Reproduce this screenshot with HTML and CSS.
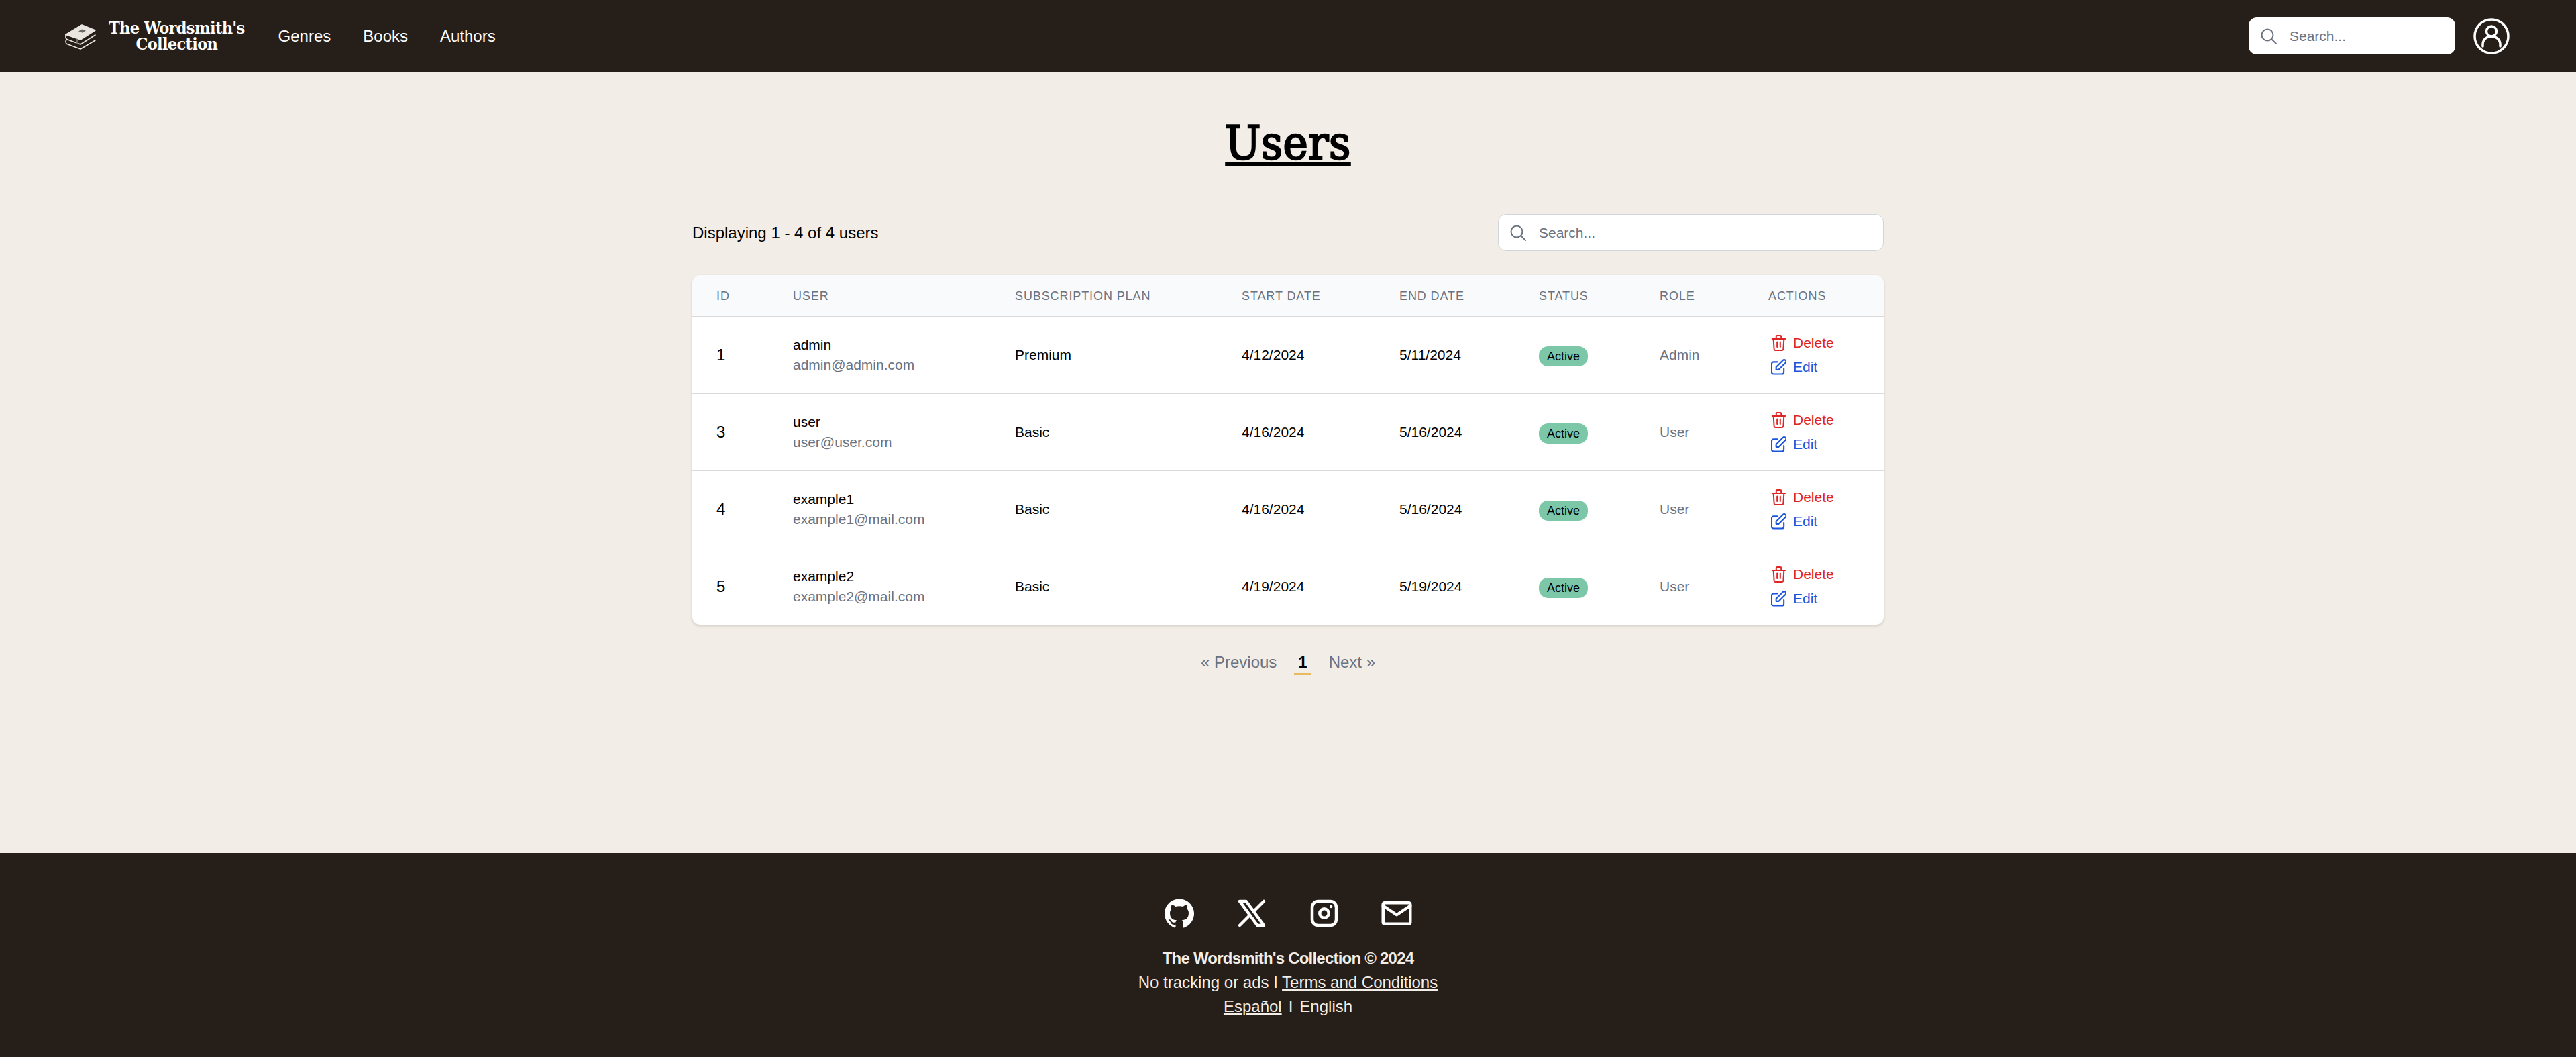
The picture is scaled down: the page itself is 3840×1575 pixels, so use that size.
FILE: index.html
```html
<!DOCTYPE html>
<html lang="en">
<head>
    <meta charset="UTF-8">
    <meta name="viewport" content="width=device-width, initial-scale=1.0">
    <title>Users - The Wordsmith's Collection</title>
    <link rel="stylesheet" href="styles.css">
</head>
<body>
    <nav class="navbar">
        <a class="brand" href="#">
            <svg class="brand-icon" viewBox="0 0 46 38" fill="none" stroke="#e9e6e1" stroke-width="1.6" stroke-linejoin="round" stroke-linecap="round">
                <path d="M1 15.5 25 1 45 9 23 23 1 15.5z" fill="#e9e6e1"/>
                <path d="M20 10.5l5-3 6 2.2-5 3z" fill="#6f6b66" stroke="none"/>
                <path d="M1 15.5v4c0 2 1 3 3 3.6L23 30 45 16"/>
                <path d="M2 23.5c-1.500 1-1.500 5 1 6L23 37 45 24"/>
                <path d="M17 21.500v8l3 1v-8z" fill="#6f6b66" stroke="none"/>
            </svg>
            <span class="brand-name">The Wordsmith's<br>Collection</span>
        </a>
        <ul class="nav-links">
            <li><a href="#">Genres</a></li>
            <li><a href="#">Books</a></li>
            <li><a href="#">Authors</a></li>
        </ul>
        <div class="nav-right">
            <label class="search search-nav">
                <svg class="search-icon" viewBox="0 0 24 24" fill="none" stroke="#6b7280" stroke-width="2" stroke-linecap="round"><circle cx="10" cy="10" r="8.500"/><path d="M16.500 16.500 23 23"/></svg>
                <input type="text" placeholder="Search...">
            </label>
            <svg class="avatar" viewBox="0 0 54 54" fill="none" stroke="#fff" stroke-width="3.500" stroke-linecap="round">
                <circle cx="27" cy="27" r="25"/>
                <circle cx="27" cy="19.500" r="7.500"/>
                <path d="M14 42v-3c0-7 6-12 13-12s13 5 13 12v3"/>
            </svg>
        </div>
    </nav>

    <main class="content">
        <h1 class="page-title">Users</h1>
        <div class="toolbar">
            <p class="count">Displaying 1 - 4 of 4 users</p>
            <label class="search search-page">
                <svg class="search-icon" viewBox="0 0 24 24" fill="none" stroke="#6b7280" stroke-width="2" stroke-linecap="round"><circle cx="10" cy="10" r="8.500"/><path d="M16.500 16.500 23 23"/></svg>
                <input type="text" placeholder="Search...">
            </label>
        </div>

        <div class="table-card">
            <table class="users-table">
                <thead>
                    <tr>
                        <th class="col-id">ID</th>
                        <th class="col-user">User</th>
                        <th class="col-plan">Subscription Plan</th>
                        <th class="col-start">Start Date</th>
                        <th class="col-end">End Date</th>
                        <th class="col-status">Status</th>
                        <th class="col-role">Role</th>
                        <th class="col-actions">Actions</th>
                    </tr>
                </thead>
                <tbody>
                    <tr>
                        <td class="cell-id">1</td>
                        <td><div>admin</div><div class="muted">admin@admin.com</div></td>
                        <td>Premium</td>
                        <td>4/12/2024</td>
                        <td>5/11/2024</td>
                        <td><span class="badge">Active</span></td>
                        <td class="muted">Admin</td>
                        <td>
                            <a class="action action-delete" href="#"><svg viewBox="0 0 24 26" fill="none" stroke="currentColor" stroke-width="2.200" stroke-linecap="round" stroke-linejoin="round"><path d="M1.500 6.500h21M8 6.500V2.500c0-.8.500-1.300 1.300-1.300h5.400c.8 0 1.300.5 1.300 1.300v4M3.500 6.500l1 16c.1 1.500 1 2.300 2.400 2.300h10.200c1.400 0 2.300-.8 2.400-2.300l1-16M9.500 11.500v8M14.500 11.500v8"/></svg>Delete</a>
                            <a class="action action-edit" href="#"><svg viewBox="0 0 24 24" fill="none" stroke="currentColor" stroke-width="2.200" stroke-linecap="round" stroke-linejoin="round"><path d="M10 4H4a3 3 0 0 0-3 3v13a3 3 0 0 0 3 3h13a3 3 0 0 0 3-3v-6"/><path d="M8 16v-4L18.500 1.500a2.800 2.800 0 0 1 4 4L12 16H8z"/></svg>Edit</a>
                        </td>
                    </tr>
                    <tr>
                        <td class="cell-id">3</td>
                        <td><div>user</div><div class="muted">user@user.com</div></td>
                        <td>Basic</td>
                        <td>4/16/2024</td>
                        <td>5/16/2024</td>
                        <td><span class="badge">Active</span></td>
                        <td class="muted">User</td>
                        <td>
                            <a class="action action-delete" href="#"><svg viewBox="0 0 24 26" fill="none" stroke="currentColor" stroke-width="2.200" stroke-linecap="round" stroke-linejoin="round"><path d="M1.500 6.500h21M8 6.500V2.500c0-.8.500-1.300 1.300-1.300h5.400c.8 0 1.300.5 1.300 1.300v4M3.500 6.500l1 16c.1 1.500 1 2.300 2.400 2.300h10.200c1.400 0 2.300-.8 2.400-2.300l1-16M9.500 11.500v8M14.500 11.500v8"/></svg>Delete</a>
                            <a class="action action-edit" href="#"><svg viewBox="0 0 24 24" fill="none" stroke="currentColor" stroke-width="2.200" stroke-linecap="round" stroke-linejoin="round"><path d="M10 4H4a3 3 0 0 0-3 3v13a3 3 0 0 0 3 3h13a3 3 0 0 0 3-3v-6"/><path d="M8 16v-4L18.500 1.500a2.800 2.800 0 0 1 4 4L12 16H8z"/></svg>Edit</a>
                        </td>
                    </tr>
                    <tr>
                        <td class="cell-id">4</td>
                        <td><div>example1</div><div class="muted">example1@mail.com</div></td>
                        <td>Basic</td>
                        <td>4/16/2024</td>
                        <td>5/16/2024</td>
                        <td><span class="badge">Active</span></td>
                        <td class="muted">User</td>
                        <td>
                            <a class="action action-delete" href="#"><svg viewBox="0 0 24 26" fill="none" stroke="currentColor" stroke-width="2.200" stroke-linecap="round" stroke-linejoin="round"><path d="M1.500 6.500h21M8 6.500V2.500c0-.8.500-1.300 1.300-1.300h5.400c.8 0 1.300.5 1.300 1.300v4M3.500 6.500l1 16c.1 1.500 1 2.300 2.400 2.300h10.200c1.400 0 2.300-.8 2.400-2.300l1-16M9.500 11.500v8M14.500 11.500v8"/></svg>Delete</a>
                            <a class="action action-edit" href="#"><svg viewBox="0 0 24 24" fill="none" stroke="currentColor" stroke-width="2.200" stroke-linecap="round" stroke-linejoin="round"><path d="M10 4H4a3 3 0 0 0-3 3v13a3 3 0 0 0 3 3h13a3 3 0 0 0 3-3v-6"/><path d="M8 16v-4L18.500 1.500a2.800 2.800 0 0 1 4 4L12 16H8z"/></svg>Edit</a>
                        </td>
                    </tr>
                    <tr>
                        <td class="cell-id">5</td>
                        <td><div>example2</div><div class="muted">example2@mail.com</div></td>
                        <td>Basic</td>
                        <td>4/19/2024</td>
                        <td>5/19/2024</td>
                        <td><span class="badge">Active</span></td>
                        <td class="muted">User</td>
                        <td>
                            <a class="action action-delete" href="#"><svg viewBox="0 0 24 26" fill="none" stroke="currentColor" stroke-width="2.200" stroke-linecap="round" stroke-linejoin="round"><path d="M1.500 6.500h21M8 6.500V2.500c0-.8.500-1.300 1.300-1.300h5.400c.8 0 1.300.5 1.300 1.300v4M3.500 6.500l1 16c.1 1.500 1 2.300 2.400 2.300h10.200c1.400 0 2.300-.8 2.400-2.300l1-16M9.500 11.500v8M14.500 11.500v8"/></svg>Delete</a>
                            <a class="action action-edit" href="#"><svg viewBox="0 0 24 24" fill="none" stroke="currentColor" stroke-width="2.200" stroke-linecap="round" stroke-linejoin="round"><path d="M10 4H4a3 3 0 0 0-3 3v13a3 3 0 0 0 3 3h13a3 3 0 0 0 3-3v-6"/><path d="M8 16v-4L18.500 1.500a2.800 2.800 0 0 1 4 4L12 16H8z"/></svg>Edit</a>
                        </td>
                    </tr>
                </tbody>
            </table>
        </div>

        <div class="pagination">
            <a href="#">« Previous</a>
            <a class="current" href="#">1</a>
            <a href="#">Next »</a>
        </div>
    </main>

    <footer class="footer">
        <div class="socials">
            <a href="#"><svg viewBox="0 0 24 24" fill="#fff"><path d="M12 .3C5.37.3 0 5.670 0 12.300c0 5.300 3.440 9.800 8.200 11.390.6.110.82-.26.82-.58v-2.040c-3.340.72-4.040-1.610-4.040-1.610-.55-1.390-1.340-1.760-1.340-1.760-1.090-.74.080-.73.080-.73 1.210.08 1.840 1.240 1.840 1.240 1.070 1.830 2.810 1.300 3.500 1 .1-.78.42-1.310.76-1.610-2.670-.3-5.470-1.330-5.470-5.930 0-1.310.47-2.380 1.240-3.220-.14-.3-.54-1.520.1-3.180 0 0 1.010-.32 3.300 1.230.96-.27 1.980-.4 3-.4s2.040.13 3 .4c2.280-1.550 3.290-1.230 3.290-1.230.64 1.660.24 2.880.12 3.180.77.84 1.230 1.910 1.230 3.220 0 4.610-2.810 5.630-5.480 5.920.43.370.81 1.100.81 2.220v3.290c0 .32.220.69.830.57C20.570 22.090 24 17.590 24 12.300 24 5.670 18.630.3 12 .3z"/></svg></a>
            <a href="#"><svg class="line-icon" viewBox="0 0 24 24"><path d="M4 4l11.733 16h4.267l-11.733-16z"/><path d="M4 20l6.768-6.768m2.460-2.460L20 4"/></svg></a>
            <a href="#"><svg class="line-icon" viewBox="0 0 24 24"><rect x="4" y="4" width="16" height="16" rx="4"/><circle cx="12" cy="12" r="3"/><path d="M16.500 7.500v.01"/></svg></a>
            <a href="#"><svg class="line-icon" viewBox="0 0 24 24"><rect x="3" y="5" width="18" height="14" rx="1"/><path d="M3 7l9 6 9-6"/></svg></a>
        </div>
        <p class="footer-title">The Wordsmith's Collection © 2024</p>
        <p>No tracking or ads I <a href="#">Terms and Conditions</a></p>
        <p><a href="#">Español</a><span class="lang-sep">I</span>English</p>
    </footer>
</body>
</html>
```

FILE: styles.css
```css
* {
    margin: 0;
    padding: 0;
    box-sizing: border-box;
}

body {
    display: flex;
    flex-direction: column;
    min-height: 100vh;
    background-color: #f2ede6;
    color: #000;
    font-family: "Liberation Sans", Arial, sans-serif;
    font-size: 24px;
    line-height: 36px;
}

a {
    color: inherit;
    text-decoration: none;
}

ul {
    list-style: none;
}

/* Navbar */
.navbar {
    display: flex;
    align-items: center;
    height: 107px;
    padding: 0 99px 0 97px;
    background-color: #261e19;
    color: #fff;
}

.brand {
    display: flex;
    align-items: center;
    gap: 19px;
}

.brand-icon {
    width: 46px;
    height: 38px;
    margin-top: 2px;
}

.brand-name {
    font-family: "DejaVu Serif Condensed", "DejaVu Serif", serif;
    font-size: 25px;
    font-weight: 700;
    letter-spacing: -0.65px;
    line-height: 24px;
    text-align: center;
}

.nav-links {
    display: flex;
    gap: 48px;
    margin-left: 50px;
}

.nav-right {
    display: flex;
    align-items: center;
    gap: 27px;
    margin-left: auto;
}

.avatar {
    width: 54px;
    height: 54px;
}

/* Search inputs */
.search {
    display: flex;
    align-items: center;
    height: 55px;
    background-color: #fff;
    border-radius: 12px;
}

.search input {
    flex: 1;
    min-width: 0;
    border: none;
    outline: none;
    background: transparent;
    font-family: inherit;
    font-size: 21px;
}

.search input::placeholder {
    color: #6b7280;
}

.search-icon {
    flex: none;
    width: 24px;
    height: 24px;
}

.search-nav {
    width: 308px;
    padding-left: 18px;
    gap: 19px;
}

.search-page {
    width: 575px;
    padding-left: 17px;
    gap: 19px;
    border: 1px solid #d1d5db;
}

/* Main */
.content {
    flex: 1;
    width: 1776px;
    margin: 0 auto;
}

.page-title {
    margin-top: 58px;
    font-family: "DejaVu Serif Condensed", "DejaVu Serif", serif;
    font-size: 70px;
    font-weight: 400;
    -webkit-text-stroke: 2.4px #000;
    letter-spacing: 0.5px;
    line-height: 96px;
    text-align: center;
    text-decoration: underline;
    text-decoration-thickness: 6px;
    text-underline-offset: 5px;
}

.toolbar {
    display: flex;
    align-items: center;
    justify-content: space-between;
    margin-top: 58px;
}

.table-card {
    margin-top: 36px;
    background-color: #fff;
    border-radius: 12px;
    box-shadow: 0 2px 4px rgba(0, 0, 0, 0.15);
    overflow: hidden;
}

.users-table {
    width: 100%;
    border-collapse: collapse;
    table-layout: fixed;
    font-size: 21px;
    line-height: 30px;
}

.users-table th {
    height: 61px;
    padding: 2px 0 0 36px;
    background-color: #f9fafb;
    border-bottom: 1px solid #d9d9d9;
    color: #6b7280;
    font-size: 18px;
    font-weight: 400;
    letter-spacing: 0.05em;
    text-align: left;
    text-transform: uppercase;
}

.users-table td {
    height: 115px;
    padding: 0 0 0 36px;
    border-bottom: 1px solid #d9d9d9;
    vertical-align: middle;
}

.users-table tbody tr:last-child td {
    border-bottom: none;
}

.col-id { width: 114px; }
.col-user { width: 331px; }
.col-plan { width: 338px; }
.col-start { width: 235px; }
.col-end { width: 208px; }
.col-status { width: 180px; }
.col-role { width: 162px; }
.col-actions { width: 208px; }

.cell-id {
    font-size: 24px;
}

.muted {
    color: #6b7280;
}

.badge {
    display: inline-block;
    margin-top: 5px;
    padding: 0 12px;
    background-color: #7cc7a7;
    border-radius: 14px;
    font-size: 18px;
    line-height: 30px;
    vertical-align: middle;
}

.action {
    display: flex;
    align-items: center;
    gap: 10px;
    height: 36px;
    margin-left: 4px;
}

.action svg {
    flex: none;
    width: 23px;
    height: 24px;
}

.action-delete {
    color: #e02424;
}

.action-edit {
    color: #1a56db;
}

/* Pagination */
.pagination {
    display: flex;
    align-items: flex-start;
    justify-content: center;
    gap: 26px;
    margin-top: 38px;
    color: #6b7280;
}

.pagination .current {
    height: 37px;
    padding: 0 6px;
    border-bottom: 3px solid #e8b95f;
    color: #000;
    font-weight: 700;
}

/* Footer */
.footer {
    flex: none;
    height: 304px;
    padding-top: 63px;
    background-color: #261e19;
    color: #f2ede6;
    text-align: center;
}

.socials {
    display: flex;
    justify-content: center;
    gap: 54px;
    margin-bottom: 22px;
}

.socials a {
    display: block;
    width: 54px;
    height: 54px;
}

.socials svg {
    display: block;
    width: 100%;
    height: 100%;
}

.socials a:first-child svg {
    width: 44px;
    height: 44px;
    margin: 5px;
}

.line-icon {
    fill: none;
    stroke: #fff;
    stroke-width: 2;
    stroke-linecap: round;
    stroke-linejoin: round;
}

.footer-title {
    font-weight: 700;
    letter-spacing: -0.78px;
}

.footer a:not(:has(svg)) {
    text-decoration: underline;
}

.lang-sep {
    margin: 0 10px;
}
```
